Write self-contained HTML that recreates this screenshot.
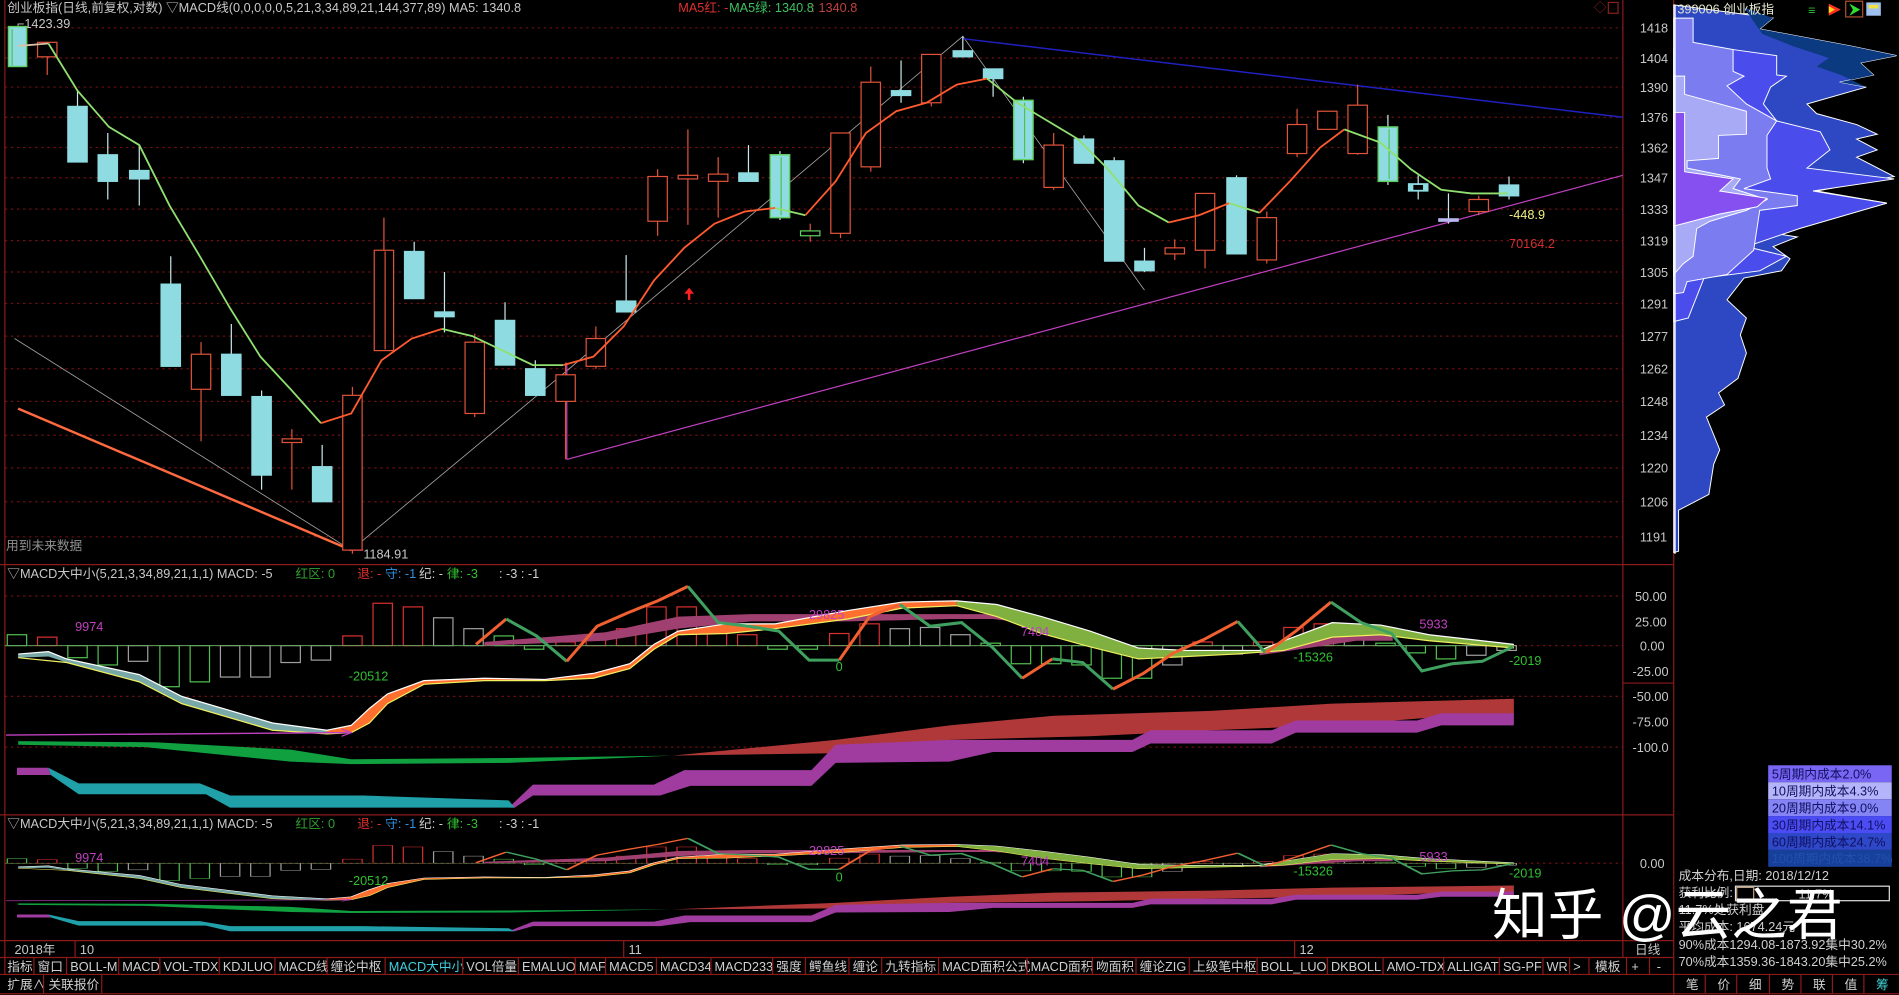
<!DOCTYPE html>
<html><head><meta charset="utf-8"><style>
html,body{margin:0;padding:0;background:#000;overflow:hidden}
svg{display:block}
text{font-family:"Liberation Sans","Noto Sans CJK SC",sans-serif;font-size:10.5px}
</style></head><body>
<svg width="1899" height="995" viewBox="0 0 1568 823" preserveAspectRatio="none" xmlns="http://www.w3.org/2000/svg">
<rect width="1568" height="823" fill="#000"/>
<g stroke="#6a1010" stroke-dasharray="2,3" stroke-width="1">
<line x1="4" y1="23" x2="1340" y2="23"/><line x1="4" y1="48" x2="1340" y2="48"/><line x1="4" y1="72" x2="1340" y2="72"/><line x1="4" y1="97" x2="1340" y2="97"/><line x1="4" y1="122" x2="1340" y2="122"/><line x1="4" y1="147" x2="1340" y2="147"/><line x1="4" y1="173" x2="1340" y2="173"/><line x1="4" y1="199" x2="1340" y2="199"/><line x1="4" y1="225" x2="1340" y2="225"/><line x1="4" y1="251" x2="1340" y2="251"/><line x1="4" y1="278" x2="1340" y2="278"/><line x1="4" y1="305" x2="1340" y2="305"/><line x1="4" y1="332" x2="1340" y2="332"/><line x1="4" y1="360" x2="1340" y2="360"/><line x1="4" y1="387" x2="1340" y2="387"/><line x1="4" y1="415" x2="1340" y2="415"/><line x1="4" y1="444" x2="1340" y2="444"/>
<line x1="4" y1="493" x2="1340" y2="493"/><line x1="4" y1="534" x2="1340" y2="534"/><line x1="4" y1="576" x2="1340" y2="576"/><line x1="4" y1="618" x2="1340" y2="618"/><line x1="4" y1="714" x2="1340" y2="714"/>
</g>
<g stroke="#8b1a1a" stroke-width="1" fill="none">
<line x1="4" y1="0" x2="4" y2="806"/>
<line x1="1340" y1="0" x2="1340" y2="792"/>
<line x1="1382" y1="0" x2="1382" y2="823"/>
<line x1="0" y1="467" x2="1382" y2="467"/>
<line x1="0" y1="674" x2="1382" y2="674"/>
<line x1="0" y1="778" x2="1382" y2="778"/>
<line x1="0" y1="792" x2="1382" y2="792"/>
<line x1="0" y1="806" x2="1568" y2="806"/>
<line x1="0" y1="822" x2="1568" y2="822"/>
<line x1="1340" y1="565" x2="1382" y2="565"/>
</g>
<g fill="#c8c8c8" font-size="10.5">
<text x="1354" y="27">1418</text><text x="1354" y="52">1404</text><text x="1354" y="76">1390</text><text x="1354" y="101">1376</text><text x="1354" y="126">1362</text><text x="1354" y="151">1347</text><text x="1354" y="177">1333</text><text x="1354" y="203">1319</text><text x="1354" y="229">1305</text><text x="1354" y="255">1291</text><text x="1354" y="282">1277</text><text x="1354" y="309">1262</text><text x="1354" y="336">1248</text><text x="1354" y="364">1234</text><text x="1354" y="391">1220</text><text x="1354" y="419">1206</text><text x="1354" y="448">1191</text>
<text x="1350" y="497">50.00</text><text x="1350" y="518">25.00</text><text x="1354" y="538">0.00</text><text x="1348" y="559">-25.00</text><text x="1348" y="580">-50.00</text><text x="1348" y="601">-75.00</text><text x="1348" y="622">-100.0</text>
<text x="1354" y="718">0.00</text>
</g>
<text x="6" y="10" fill="#c8c8c8" font-size="10">创业板指(日线,前复权,对数) ▽MACD线(0,0,0,0,0,5,21,3,34,89,21,144,377,89)  MA5: 1340.8</text>
<text x="560" y="10" fill="#e03030" font-size="10">MA5红: -</text><text x="602" y="10" fill="#40c060" font-size="10">MA5绿: 1340.8</text><text x="670" y="10" fill="#c04040" font-size="10"> : 1340.8</text>
<text x="1316" y="10" fill="#8b2020">◇</text><rect x="1328" y="2" width="8" height="9" fill="none" stroke="#8b2020"/>
<text x="14" y="23" fill="#c8c8c8">⌐1423.39</text>
<text x="5" y="455" fill="#909090">用到未来数据</text>
<text x="300" y="462" fill="#c8c8c8">1184.91</text>
<text x="1246" y="181" fill="#f0f080">-448.9</text>
<text x="1246" y="205" fill="#d03030">70164.2</text>
<polyline points="12,280 290,455 470,305 795,30 945,240" fill="none" stroke="#a0a0a0" stroke-width="0.7"/>
<line x1="15" y1="338" x2="290" y2="455" stroke="#ff6a40" stroke-width="2"/>
<line x1="468" y1="380" x2="1340" y2="145" stroke="#c040c0" stroke-width="1"/>
<line x1="468" y1="300" x2="468" y2="380" stroke="#c040c0" stroke-width="1"/>
<line x1="795" y1="32" x2="1340" y2="97" stroke="#2020c0" stroke-width="1.2"/>
<line x1="290" y1="455" x2="300" y2="455" stroke="#c040c0"/>
<path d="M569 238 L565 243 L568 243 L568 248 L570 248 L570 243 L573 243 Z" fill="#ff2020"/>
<g stroke-width="1">
<g stroke="#e0533a">
<line x1="39" y1="35" x2="39" y2="62"/><line x1="166" y1="283" x2="166" y2="365"/><line x1="241" y1="355" x2="241" y2="405"/><line x1="291" y1="320" x2="291" y2="458"/><line x1="317" y1="180" x2="317" y2="290"/><line x1="392" y1="276" x2="392" y2="345"/><line x1="467" y1="300" x2="467" y2="380"/><line x1="492" y1="270" x2="492" y2="305"/><line x1="543" y1="140" x2="543" y2="195"/><line x1="568" y1="107" x2="568" y2="186"/><line x1="593" y1="130" x2="593" y2="180"/><line x1="669" y1="185" x2="669" y2="200"/><line x1="694" y1="110" x2="694" y2="197"/><line x1="719" y1="55" x2="719" y2="142"/><line x1="769" y1="45" x2="769" y2="88"/><line x1="870" y1="110" x2="870" y2="157"/><line x1="970" y1="198" x2="970" y2="215"/><line x1="995" y1="160" x2="995" y2="222"/><line x1="1046" y1="175" x2="1046" y2="218"/><line x1="1071" y1="90" x2="1071" y2="130"/><line x1="1121" y1="70" x2="1121" y2="128"/><line x1="1221" y1="162" x2="1221" y2="178"/>
</g>
<g stroke="#c8e8ea">
<line x1="64" y1="75" x2="64" y2="134"/><line x1="89" y1="110" x2="89" y2="165"/><line x1="115" y1="120" x2="115" y2="170"/><line x1="141" y1="212" x2="141" y2="303"/><line x1="191" y1="268" x2="191" y2="327"/><line x1="216" y1="323" x2="216" y2="405"/><line x1="266" y1="368" x2="266" y2="415"/><line x1="342" y1="200" x2="342" y2="247"/><line x1="367" y1="225" x2="367" y2="275"/><line x1="417" y1="250" x2="417" y2="302"/><line x1="442" y1="298" x2="442" y2="327"/><line x1="517" y1="211" x2="517" y2="258"/><line x1="618" y1="120" x2="618" y2="150"/><line x1="644" y1="125" x2="644" y2="182"/><line x1="744" y1="50" x2="744" y2="85"/><line x1="795" y1="30" x2="795" y2="47"/><line x1="820" y1="57" x2="820" y2="80"/><line x1="845" y1="80" x2="845" y2="135"/><line x1="895" y1="112" x2="895" y2="135"/><line x1="920" y1="130" x2="920" y2="216"/><line x1="945" y1="205" x2="945" y2="225"/><line x1="1021" y1="145" x2="1021" y2="210"/><line x1="1146" y1="95" x2="1146" y2="153"/><line x1="1171" y1="145" x2="1171" y2="165"/><line x1="1196" y1="160" x2="1196" y2="185"/><line x1="1246" y1="146" x2="1246" y2="165"/>
</g>
<g fill="#8edce2" stroke="#8edce2">
<rect x="56" y="88" width="16" height="46"/><rect x="81" y="128" width="16" height="22"/><rect x="107" y="141" width="16" height="7"/><rect x="133" y="235" width="16" height="68"/><rect x="183" y="293" width="16" height="34"/><rect x="208" y="328" width="16" height="65"/><rect x="258" y="386" width="16" height="29"/><rect x="334" y="208" width="16" height="39"/><rect x="359" y="258" width="16" height="4"/><rect x="409" y="265" width="16" height="37"/><rect x="434" y="305" width="16" height="22"/><rect x="509" y="249" width="16" height="9"/><rect x="610" y="143" width="16" height="7"/><rect x="736" y="75" width="16" height="4"/><rect x="787" y="42" width="16" height="5"/><rect x="812" y="57" width="16" height="8"/><rect x="887" y="115" width="16" height="20"/><rect x="912" y="133" width="16" height="83"/><rect x="937" y="216" width="16" height="8"/><rect x="1013" y="147" width="16" height="63"/><rect x="1163" y="152" width="16" height="6"/><rect x="1188" y="181" width="16" height="2" fill="#b8b8f0" stroke="#b8b8f0"/><rect x="1238" y="153" width="16" height="9"/>
</g>
<g fill="#8edce2" stroke="#60d060" stroke-width="1.2">
<rect x="7" y="22" width="15" height="33"/><rect x="636" y="128" width="16" height="52"/><rect x="837" y="83" width="16" height="49"/><rect x="1138" y="105" width="16" height="45"/>
</g>
<g fill="none" stroke="#50c050"><line x1="10" y1="24" x2="10" y2="54"/><line x1="645" y1="130" x2="645" y2="178"/><line x1="846" y1="85" x2="846" y2="130"/><line x1="1147" y1="107" x2="1147" y2="148"/></g>
<g fill="#000" stroke="#e0533a">
<rect x="31" y="35" width="16" height="12"/><rect x="158" y="293" width="16" height="29"/><rect x="233" y="363" width="16" height="3"/><rect x="283" y="327" width="16" height="128"/><rect x="309" y="207" width="16" height="83"/><rect x="384" y="283" width="16" height="59"/><rect x="459" y="310" width="16" height="22"/><rect x="484" y="280" width="16" height="23"/><rect x="535" y="146" width="16" height="37"/><rect x="560" y="145" width="16" height="3"/><rect x="585" y="144" width="16" height="6"/><rect x="661" y="191" width="16" height="4" stroke="#60d060"/><rect x="686" y="110" width="16" height="83"/><rect x="711" y="68" width="16" height="70"/><rect x="761" y="45" width="16" height="40"/><rect x="862" y="120" width="16" height="35"/><rect x="962" y="205" width="16" height="5"/><rect x="987" y="160" width="16" height="47"/><rect x="1038" y="180" width="16" height="35"/><rect x="1063" y="103" width="16" height="24"/><rect x="1088" y="92" width="16" height="15"/><rect x="1113" y="87" width="16" height="40"/><rect x="1213" y="165" width="16" height="10"/>
</g>
<line x1="318" y1="208" x2="318" y2="289" stroke="#e0533a"/>
<rect x="1167" y="153" width="8" height="4" fill="#000"/>
</g>
<polyline points="15,38 40,36" fill="none" stroke="#d8c0a0" stroke-width="1.5"/>
<polyline points="40,36 64,75 90,105 115,120 140,170 165,212 190,255 215,295 240,322 265,350" fill="none" stroke="#90e070" stroke-width="1.5"/>
<polyline points="265,350 290,342 315,298 340,280 365,272" fill="none" stroke="#ff5a30" stroke-width="1.5"/>
<polyline points="365,272 390,278 415,290 440,302 465,302" fill="none" stroke="#90e070" stroke-width="1.5"/>
<polyline points="465,302 490,295 515,270 540,232 565,205 590,185 615,175 640,172" fill="none" stroke="#ff5a30" stroke-width="1.5"/>
<polyline points="640,172 665,178" fill="none" stroke="#90e070" stroke-width="1.5"/>
<polyline points="665,178 690,150 715,110 740,92 765,85 790,70 815,65" fill="none" stroke="#ff5a30" stroke-width="1.5"/>
<polyline points="815,65 840,85 865,100 890,115 915,140 940,170 965,184" fill="none" stroke="#90e070" stroke-width="1.5"/>
<polyline points="965,184 990,178 1015,168" fill="none" stroke="#ff5a30" stroke-width="1.5"/>
<polyline points="1015,168 1040,176" fill="none" stroke="#90e070" stroke-width="1.5"/>
<polyline points="1040,176 1065,150 1090,122 1110,107" fill="none" stroke="#ff5a30" stroke-width="1.5"/>
<polyline points="1110,107 1140,118 1165,140 1190,157 1215,160 1245,160" fill="none" stroke="#90e070" stroke-width="1.5"/>

<g stroke="#fff" stroke-width="0.8">
<polygon fill="#2e48c4" points="1382,4 1464,15 1453,24 1528,38 1566,46 1536,52 1547,62 1519,68 1541,72 1492,86 1500,94 1533,103 1550,111 1533,115 1550,124 1533,130 1564,146 1500,158 1558,168 1514,180 1459,192 1484,196 1464,204 1478,214 1471,224 1440,230 1426,248 1442,263 1437,277 1442,292 1435,313 1419,325 1424,335 1409,345 1420,372 1415,384 1411,409 1386,422 1386,456 1382,457"/>
<polygon fill="#0c3a80" stroke="none" points="1440,6 1464,15 1453,24 1528,38 1566,46 1536,52 1547,62 1519,68 1541,72 1520,62 1500,55 1510,48 1480,38 1455,28"/>
<polygon fill="#4a4cec" points="1382,41 1431,41 1467,46 1467,62 1475,63 1462,72 1456,86 1467,100 1503,109 1511,124 1492,139 1564,148 1497,158 1558,168 1486,189 1442,204 1475,212 1453,224 1407,230 1394,263 1382,266"/>
<polygon fill="#7a7cf0" points="1382,15 1398,15 1398,35 1431,41 1431,59 1440,63 1426,71 1442,86 1467,100 1459,112 1459,139 1462,148 1440,156 1484,162 1484,170 1453,174 1448,207 1426,227 1393,233 1390,242 1382,243"/>
<polygon fill="#a8aaf5" points="1382,63 1391,63 1391,78 1442,92 1442,111 1419,112 1419,131 1393,133 1393,139 1437,148 1431,156 1459,165 1442,174 1412,183 1401,189 1398,212 1390,218 1382,227"/>
<polygon fill="#8650f0" points="1382,93 1391,93 1391,142 1431,148 1420,158 1459,164 1451,171 1420,177 1382,187"/>
</g>
<line x1="1383" y1="4" x2="1383" y2="458" stroke="#fff" stroke-width="1.2"/>
<text x="1385" y="11" fill="#e8e8d0" font-size="10">399006 创业板指</text>
<g font-size="11">
<text x="1493" y="12" fill="#30c030">≡</text>
<path d="M1510 3 L1520 8 L1510 13 Z" fill="#ff3020"/><path d="M1510 5 L1515 8 L1510 11Z" fill="#ffd020"/>
<rect x="1524" y="1" width="14" height="13" fill="none" stroke="#b05030"/><path d="M1527 3 L1536 8 L1527 13 L1530 8Z" fill="#30e030"/>
<rect x="1541" y="2" width="12" height="11" fill="#a0c0f0"/><rect x="1543" y="4" width="8" height="3" fill="#f0e040"/>
</g>
<g font-size="9.5">
<rect x="1460" y="633" width="102" height="14" fill="#7a66f4"/><text x="1463" y="644" fill="#101060">5周期内成本2.0%</text>
<rect x="1460" y="647" width="102" height="14" fill="#b4b4fa"/><text x="1463" y="658" fill="#101060">10周期内成本4.3%</text>
<rect x="1460" y="661" width="102" height="14" fill="#8484f4"/><text x="1463" y="672" fill="#101060">20周期内成本9.0%</text>
<rect x="1460" y="675" width="102" height="14" fill="#4c4cf4"/><text x="1463" y="686" fill="#101060">30周期内成本14.1%</text>
<rect x="1460" y="689" width="102" height="14" fill="#2e48c8"/><text x="1463" y="700" fill="#101060">60周期内成本24.7%</text>
<rect x="1460" y="703" width="102" height="14" fill="#17409a"/><text x="1463" y="714" fill="#2050b0">100周期内成本38.7%</text>
</g>
<g fill="#d0d0d0" font-size="10">
<text x="1386" y="728">成本分布,日期: 2018/12/12</text>
<text x="1386" y="742">获利比例:</text>
<rect x="1433" y="733" width="127" height="12" fill="none" stroke="#e0e0e0"/><rect x="1434" y="734" width="14" height="10" fill="none" stroke="#c0a080"/>
<text x="1485" y="743">11.7%</text>
<text x="1386" y="756">11.7%处获利盘</text>
<text x="1386" y="770">平均成本: 1674.24元</text>
<text x="1386" y="785">90%成本1294.08-1873.92集中30.2%</text>
<text x="1386" y="799">70%成本1359.36-1843.20集中25.2%</text>
</g>

<g id="mg">
<g fill="none" stroke-width="1">
<g stroke="#50c050">
<rect x="6" y="525" width="16" height="9"/><rect x="56" y="534" width="16" height="10"/><rect x="81" y="534" width="16" height="16"/><rect x="132" y="534" width="16" height="34"/><rect x="157" y="534" width="16" height="30"/><rect x="408" y="526" width="16" height="8"/><rect x="433" y="534" width="16" height="3"/><rect x="634" y="534" width="16" height="3"/><rect x="659" y="534" width="16" height="3"/><rect x="810" y="532" width="16" height="2"/><rect x="835" y="534" width="16" height="15"/><rect x="860" y="534" width="16" height="15"/><rect x="885" y="534" width="16" height="16"/><rect x="910" y="534" width="16" height="27"/><rect x="935" y="534" width="16" height="27"/><rect x="1136" y="532" width="16" height="2"/><rect x="1161" y="534" width="16" height="6"/><rect x="1186" y="534" width="16" height="11"/>
</g>
<g stroke="#a0a0a0">
<rect x="106" y="534" width="16" height="13"/><rect x="182" y="534" width="16" height="26"/><rect x="207" y="534" width="16" height="26"/><rect x="232" y="534" width="16" height="14"/><rect x="257" y="534" width="16" height="12"/><rect x="358" y="511" width="16" height="23"/><rect x="383" y="520" width="16" height="14"/><rect x="735" y="520" width="16" height="14"/><rect x="760" y="519" width="16" height="15"/><rect x="785" y="525" width="16" height="9"/><rect x="960" y="534" width="16" height="16"/><rect x="1010" y="534" width="16" height="7"/><rect x="1110" y="517" width="16" height="17"/><rect x="1211" y="534" width="16" height="8"/><rect x="1236" y="534" width="16" height="4"/>
</g>
<g stroke="#d83030">
<rect x="31" y="527" width="16" height="7"/><rect x="283" y="526" width="16" height="8"/><rect x="308" y="499" width="16" height="35"/><rect x="333" y="502" width="16" height="32"/><rect x="459" y="531" width="16" height="3"/><rect x="484" y="525" width="16" height="9"/><rect x="509" y="520" width="16" height="14"/><rect x="534" y="502" width="16" height="32"/><rect x="559" y="502" width="16" height="32"/><rect x="584" y="520" width="16" height="14"/><rect x="609" y="525" width="16" height="9"/><rect x="685" y="524" width="16" height="10"/><rect x="710" y="516" width="16" height="18"/><rect x="985" y="531" width="16" height="3"/><rect x="1035" y="531" width="16" height="3"/><rect x="1060" y="519" width="16" height="15"/><rect x="1085" y="516" width="16" height="18"/>
</g>
<line x1="4" y1="534" x2="1250" y2="534" stroke="#60a060" stroke-width="0.8"/>
</g>
<polygon fill="#a04070" points="400,531 500,523 560,510 620,508 700,508 784,508 820,508 870,514 870,518 820,512 784,512 700,514 620,514 560,520 500,530 400,534"/>
<polygon fill="#a04070" points="1040,540 1080,530 1120,524 1150,526 1150,530 1120,530 1080,536 1040,542"/>
<polygon fill="#78a8a8" points="15,541 40,539 55,545 115,558 150,576 225,598 270,604 270,607 225,604 150,582 115,564 55,548 40,543 15,544"/>
<polygon fill="#ff7030" points="270,604 290,600 305,586 320,574 350,563 400,561 450,562 490,557 520,549 540,533 560,522 600,516 640,516 700,505 745,498 790,497 790,501 745,503 700,512 640,520 600,524 560,525 540,537 520,553 490,561 450,563 400,563 350,566 320,582 305,598 290,606 270,607"/>
<polygon fill="#80b040" points="790,497 823,500 860,510 900,522 940,536 980,538 1040,538 1060,530 1100,515 1140,517 1180,525 1250,533 1250,536 1180,530 1140,525 1100,527 1060,538 1020,541 980,543 940,545 900,535 860,524 823,510 790,501"/>
<polyline points="15,541 40,539 55,545 115,558 150,576 225,598 270,604 290,600 305,586 320,574 350,563 400,561 450,562 490,557 520,549 540,533 560,522 600,516 640,516 700,505 745,498 790,497 823,500 860,510 900,522 940,536 980,538 1040,538 1060,530 1100,515 1140,517 1180,525 1250,533" fill="none" stroke="#ffffff" stroke-width="1"/>
<polyline points="15,544 55,548 115,564 150,582 225,604 270,607 290,606 305,598 320,582 350,566 400,563 450,563 490,561 520,553 540,537 560,525 600,524 640,520 700,512 745,503 790,501 823,510 860,524 900,535 940,545 980,543 1020,541 1060,538 1100,527 1140,525 1180,530 1250,536" fill="none" stroke="#f0f060" stroke-width="1"/>
<g fill="none" stroke-width="2.5">
<polyline stroke="#f06030" points="393,533 418,512"/><polyline stroke="#40a060" points="418,512 443,526 468,547"/><polyline stroke="#f06030" points="468,547 493,518 518,507 543,497 568,485"/><polyline stroke="#40a060" points="568,485 593,515 618,518 643,522 668,546 693,546"/><polyline stroke="#f06030" points="693,546 718,510 743,500"/><polyline stroke="#40a060" points="743,500 768,518 794,515 819,535 844,561"/><polyline stroke="#f06030" points="844,561 869,545"/><polyline stroke="#40a060" points="869,545 894,548 919,570"/><polyline stroke="#f06030" points="919,570 944,557 969,540 994,529 1022,514"/><polyline stroke="#40a060" points="1022,514 1045,540"/><polyline stroke="#f06030" points="1045,540 1070,522 1099,498"/><polyline stroke="#40a060" points="1099,498 1124,515 1149,524 1174,555 1199,549 1224,547 1249,535"/>
</g>
<line x1="5" y1="608" x2="288" y2="606" stroke="#c040c0" stroke-width="1.2"/><path d="M282 603 L290 606 L282 609" fill="none" stroke="#c040c0"/>
<polygon fill="#10a040" points="15,613 130,614 240,620 290,628 420,627 555,625 420,631 290,632 240,630 120,618 15,616"/>
<polygon fill="#b03838" points="555,625 690,612 784,600 870,592 1000,588 1100,582 1250,578 1250,591 1200,592 1100,600 1000,604 900,609 784,612 690,623"/>
<polygon fill="#a03ca0" points="420,668 440,649 540,649 565,637 670,637 690,616 784,612 935,612 950,604 1050,604 1070,596 1170,596 1190,590 1250,590 1250,600 1190,600 1170,606 1070,606 1050,615 950,615 935,622 820,622 784,630 690,631 670,650 570,650 545,658 440,658 425,668"/>
<polygon fill="#a03ca0" points="14,635 40,635 42,641 14,641"/>
<polygon fill="#20a0a8" points="40,635 65,648 165,648 190,658 300,658 420,662 425,668 190,668 170,657 65,657 42,641"/>
</g>
<use href="#mg" transform="translate(0,714) scale(1,0.42) translate(0,-534)"/>
<g font-size="10">
<text x="6" y="478" fill="#c8c8c8">▽MACD大中小(5,21,3,34,89,21,1,1)  MACD: -5</text>
<text x="244" y="478" fill="#30a030">红区: 0</text><text x="295" y="478" fill="#e03030">退: -</text><text x="318" y="478" fill="#3090e0">守: -1</text><text x="346" y="478" fill="#d0d0d0">纪: -</text><text x="369" y="478" fill="#30c030">律: -3</text><text x="412" y="478" fill="#d0d0d0">: -3 : -1</text>
<text x="6" y="685" fill="#c8c8c8">▽MACD大中小(5,21,3,34,89,21,1,1)  MACD: -5</text>
<text x="244" y="685" fill="#30a030">红区: 0</text><text x="295" y="685" fill="#e03030">退: -</text><text x="318" y="685" fill="#3090e0">守: -1</text><text x="346" y="685" fill="#d0d0d0">纪: -</text><text x="369" y="685" fill="#30c030">律: -3</text><text x="412" y="685" fill="#d0d0d0">: -3 : -1</text>
<g fill="#c040c0"><text x="62" y="522">9974</text><text x="668" y="512">29825</text><text x="843" y="526">7404</text><text x="1172" y="520">5933</text>
<text x="62" y="713">9974</text><text x="668" y="707">29825</text><text x="843" y="716">7404</text><text x="1172" y="712">5933</text></g>
<g fill="#30c030"><text x="288" y="563">-20512</text><text x="690" y="555">0</text><text x="1068" y="547">-15326</text><text x="1246" y="550">-2019</text>
<text x="288" y="732">-20512</text><text x="690" y="729">0</text><text x="1068" y="724">-15326</text><text x="1246" y="726">-2019</text></g>
</g>
<g fill="#c8c8c8" font-size="10.5">
<text x="12" y="789">2018年</text><text x="66" y="789">10</text><text x="519" y="789">11</text><text x="1073" y="789">12</text><text x="1350" y="789">日线</text>
</g>
<g stroke="#8b1a1a"><line x1="62" y1="778" x2="62" y2="792"/><line x1="515" y1="778" x2="515" y2="792"/><line x1="1069" y1="778" x2="1069" y2="792"/></g>
<g font-size="9.6" fill="#d0d0d0">
<text x="6" y="803">指标</text><text x="31" y="803">窗口</text><text x="58" y="803">BOLL-M</text><text x="101" y="803">MACD</text><text x="135" y="803">VOL-TDX</text><text x="184" y="803">KDJLUO</text><text x="230" y="803">MACD线</text><text x="273" y="803">缠论中枢</text><text x="321" y="803" fill="#40d0e0">MACD大中小</text><text x="385" y="803">VOL倍量</text><text x="431" y="803">EMALUO</text><text x="478" y="803">MAF</text><text x="503" y="803">MACD5</text><text x="545" y="803">MACD34</text><text x="590" y="803">MACD233</text><text x="641" y="803">强度</text><text x="668" y="803">鳄鱼线</text><text x="704" y="803">缠论</text><text x="731" y="803">九转指标</text><text x="778" y="803">MACD面积公式</text><text x="851" y="803">MACD面积</text><text x="905" y="803">吻面积</text><text x="941" y="803">缠论ZIG</text><text x="985" y="803">上级笔中枢</text><text x="1041" y="803">BOLL_LUO</text><text x="1099" y="803">DKBOLL</text><text x="1145" y="803">AMO-TDX</text><text x="1195" y="803">ALLIGAT</text><text x="1241" y="803">SG-PF</text><text x="1277" y="803">WR</text><text x="1299" y="803">&gt;</text><text x="1317" y="803">模板</text><text x="1347" y="803">+</text><text x="1368" y="803">-</text>
<text x="6" y="818">扩展∧</text><text x="40" y="818">关联报价</text>
<text x="1392" y="818">笔</text><text x="1418" y="818">价</text><text x="1444" y="818">细</text><text x="1471" y="818">势</text><text x="1497" y="818">联</text><text x="1523" y="818">值</text><text x="1549" y="818">主</text>
</g>
<rect x="1546" y="808" width="16" height="13" fill="#000"/><text x="1549" y="818" fill="#40d0d0" font-size="9.6">筹</text>
<g stroke="#8b1a1a">
<line x1="28" y1="792" x2="28" y2="806"/><line x1="55" y1="792" x2="55" y2="806"/><line x1="98" y1="792" x2="98" y2="806"/><line x1="132" y1="792" x2="132" y2="806"/><line x1="181" y1="792" x2="181" y2="806"/><line x1="227" y1="792" x2="227" y2="806"/><line x1="270" y1="792" x2="270" y2="806"/><line x1="318" y1="792" x2="318" y2="806"/><line x1="382" y1="792" x2="382" y2="806"/><line x1="428" y1="792" x2="428" y2="806"/><line x1="475" y1="792" x2="475" y2="806"/><line x1="500" y1="792" x2="500" y2="806"/><line x1="542" y1="792" x2="542" y2="806"/><line x1="587" y1="792" x2="587" y2="806"/><line x1="638" y1="792" x2="638" y2="806"/><line x1="665" y1="792" x2="665" y2="806"/><line x1="701" y1="792" x2="701" y2="806"/><line x1="728" y1="792" x2="728" y2="806"/><line x1="775" y1="792" x2="775" y2="806"/><line x1="848" y1="792" x2="848" y2="806"/><line x1="902" y1="792" x2="902" y2="806"/><line x1="938" y1="792" x2="938" y2="806"/><line x1="982" y1="792" x2="982" y2="806"/><line x1="1038" y1="792" x2="1038" y2="806"/><line x1="1096" y1="792" x2="1096" y2="806"/><line x1="1142" y1="792" x2="1142" y2="806"/><line x1="1192" y1="792" x2="1192" y2="806"/><line x1="1238" y1="792" x2="1238" y2="806"/><line x1="1274" y1="792" x2="1274" y2="806"/><line x1="1296" y1="792" x2="1296" y2="806"/><line x1="1312" y1="792" x2="1312" y2="806"/><line x1="1343" y1="792" x2="1343" y2="806"/><line x1="1362" y1="792" x2="1362" y2="806"/>
<line x1="36" y1="806" x2="36" y2="822"/><line x1="84" y1="806" x2="84" y2="822"/>
<line x1="1408" y1="806" x2="1408" y2="822"/><line x1="1434" y1="806" x2="1434" y2="822"/><line x1="1461" y1="806" x2="1461" y2="822"/><line x1="1487" y1="806" x2="1487" y2="822"/><line x1="1513" y1="806" x2="1513" y2="822"/><line x1="1539" y1="806" x2="1539" y2="822"/>
</g>
<text x="1232" y="773" fill="#ffffff" style="font-size:46px">知乎 @云之君</text>
</svg>
</body></html>
